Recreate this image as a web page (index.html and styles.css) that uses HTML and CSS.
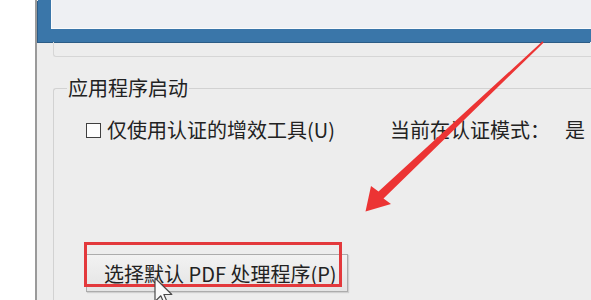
FILE: index.html
```html
<!DOCTYPE html>
<html lang="zh-CN">
<head>
  <meta charset="UTF-8">
  <meta name="viewport" content="width=device-width, initial-scale=1.0">
  <title>首选项</title>
  <link rel="stylesheet" href="styles.css">
</head>
<body>
  <!-- Dialog panel -->
  <div class="dialog">
    <div class="editor">
      <div class="editor-inner"></div>
    </div>
    <div class="subpanel"></div>

    <!-- Application startup group -->
    <fieldset class="group">
      <legend>应用程序启动</legend>
      <div class="row">
        <label class="check">
          <span class="box"></span>
          <span>仅使用认证的增效工具(U)</span>
        </label>
        <span class="status">当前在认证模式：<span class="status-value">是</span></span>
      </div>
      <button class="pick-btn">选择默认 PDF 处理程序(P)</button>
    </fieldset>
  </div>

  <!-- Annotation overlays -->
  <div class="highlight"></div>
  <svg class="arrow" width="591" height="300" viewBox="0 0 591 300">
    <polygon points="542.5,41.3 378.5,191.5 371,186 365.5,211.5 391,204 383.5,198.5 543.5,42.7" fill="#ec3434"/>
  </svg>
  <svg class="cursor" width="20" height="32" viewBox="0 0 20 32">
    <path d="M1 1 L1 24.5 L6.8 18.8 L11.2 28.8 L14.3 27.4 L9.9 17.5 L17.8 17.5 Z" fill="#fafafa" stroke="#4a4a4a" stroke-width="1.2" stroke-linejoin="round"/>
  </svg>
</body>
</html>
```

FILE: styles.css
```css
/* General styling */
body {
  margin: 0;
  width: 591px;
  height: 300px;
  overflow: hidden;
  background-color: #ffffff;
  font-family: "Noto Sans CJK SC", "Microsoft YaHei", sans-serif;
  color: #222;
  position: relative;
}

/* Dialog panel */
.dialog {
  margin-left: 35px;
  height: 300px;
  overflow: hidden;
  border-left: 2px solid #9a9a9a;
  background-color: #ededed;
}

.editor {
  margin-left: 1px;
  height: 29px;
  border-left: 13px solid #3a76a9;
  border-bottom: 13px solid #3a76a9;
  box-shadow: -1px 1px 0 #2c5c86;
}

.editor-inner {
  height: 100%;
  box-sizing: border-box;
  border-left: 1px solid #fbfbfb;
  border-bottom: 1px solid #fbfbfb;
  background-color: #eef0f3;
}

.subpanel {
  margin-left: 16px;
  height: 14px;
  border-left: 1px solid #d6d6d6;
  border-bottom: 1px solid #d6d6d6;
  border-bottom-left-radius: 3px;
}

/* Group box */
.group {
  margin: 21px 0 0 16px;
  padding: 0 0 0 32px;
  border: 1px solid #d2d2d2;
  border-right: none;
  border-radius: 3px 0 0 0;
  height: 240px;
}

.group legend {
  margin-left: -19px;
  padding: 0 1px;
  font-size: 20px;
  line-height: 20px;
}

.row {
  display: flex;
  align-items: center;
  margin-top: 20px;
  font-size: 20px;
  line-height: 24px;
}

.check {
  display: flex;
  align-items: center;
}

.box {
  flex: none;
  box-sizing: border-box;
  width: 15px;
  height: 15px;
  margin-right: 6px;
  border: 1.5px solid #3f3f3f;
  background-color: #fdfdfd;
}

.status {
  margin-left: 55px;
}

.status-value {
  margin-left: 15px;
}

/* Button */
.pick-btn {
  display: block;
  margin-top: 112px;
  width: 262px;
  height: 38px;
  padding: 0 0 0 17px;
  text-align: left;
  font-family: inherit;
  font-size: 20px;
  color: #222;
  border: 1px solid #acacac;
  border-radius: 0;
  background: linear-gradient(#f2f2f2, #e4e4e4);
  box-shadow: 1px 1px 1px rgba(0, 0, 0, 0.12);
}

/* Annotation overlays */
.highlight {
  position: absolute;
  left: 84px;
  top: 242px;
  width: 252px;
  height: 39px;
  border: 3px solid #e3393c;
}

.arrow {
  position: absolute;
  left: 0;
  top: 0;
}

.cursor {
  position: absolute;
  left: 154px;
  top: 277px;
}
```
